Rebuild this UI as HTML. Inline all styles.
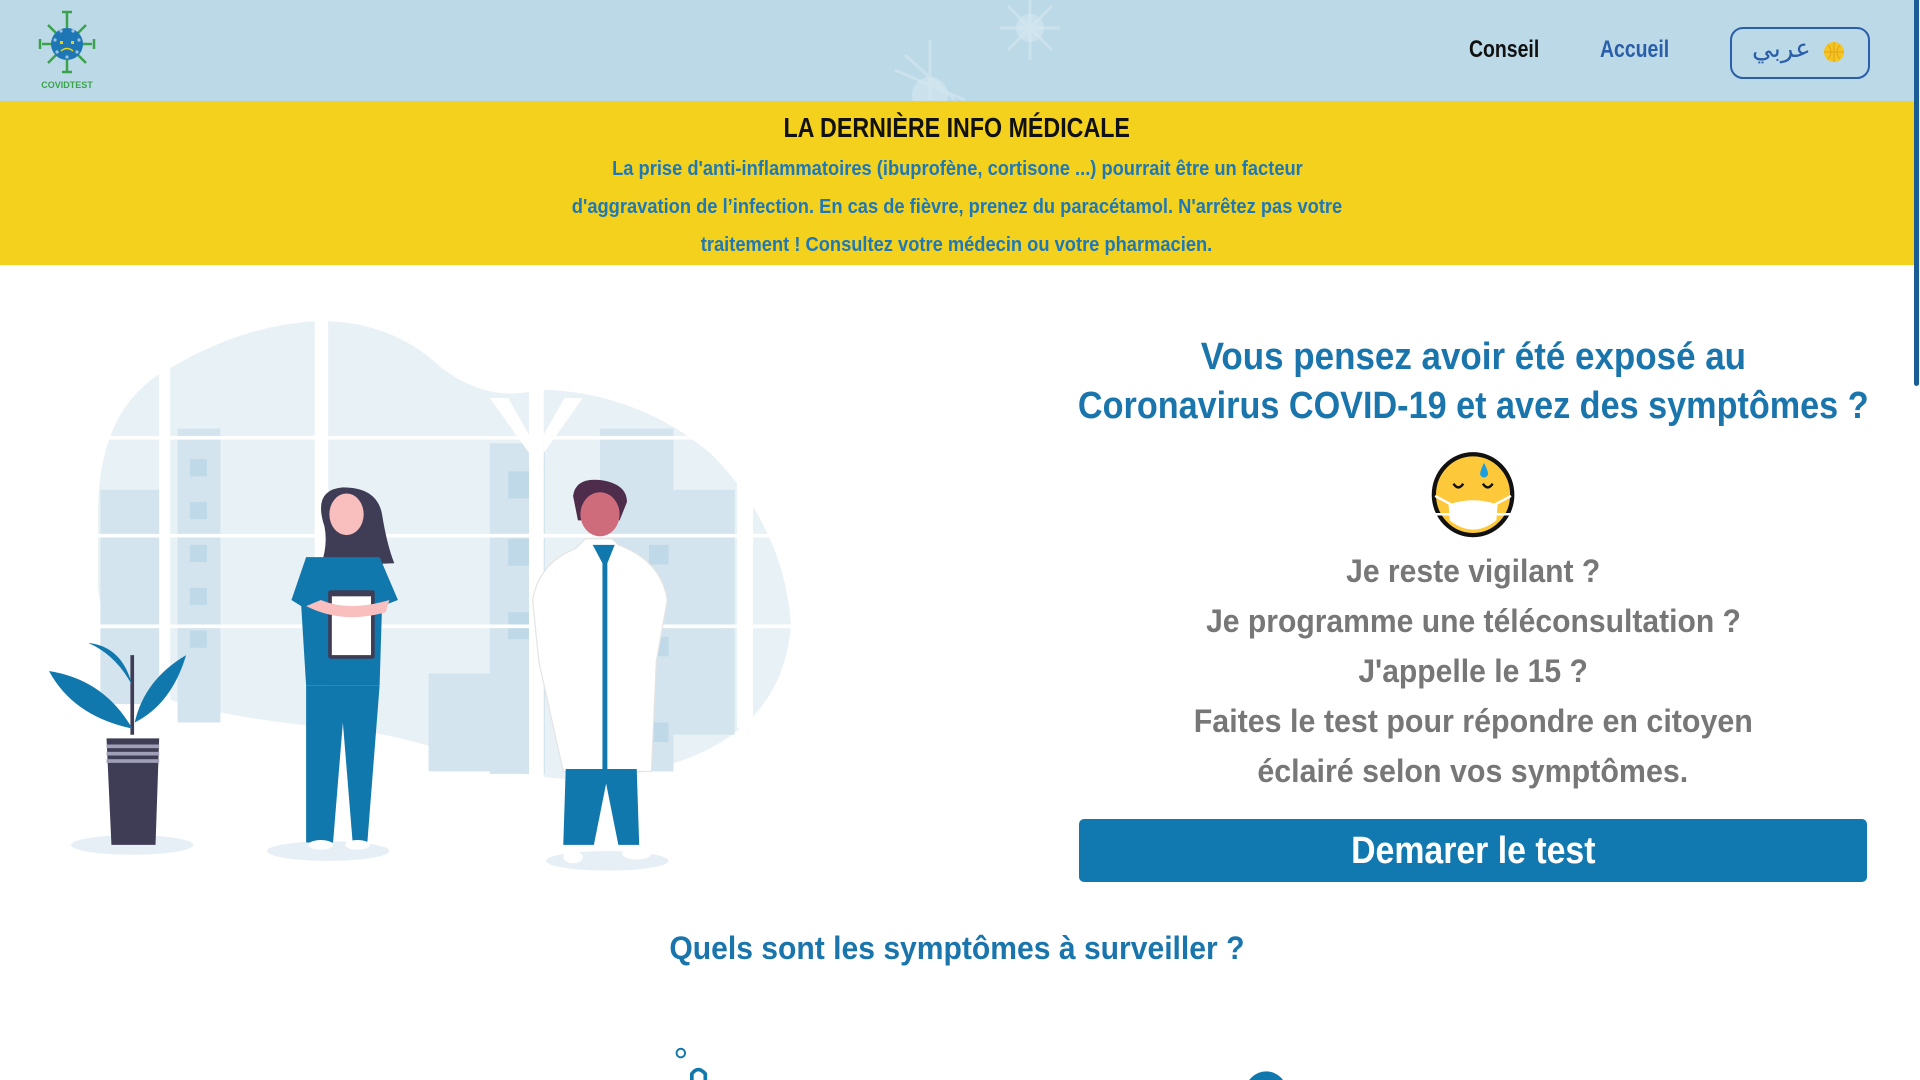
<!DOCTYPE html>
<html><head><meta charset="utf-8"><style>
*{margin:0;padding:0;box-sizing:border-box}
body{width:1920px;height:1080px;overflow:hidden;background:#fff;position:relative;font-family:"Liberation Sans",sans-serif;font-weight:bold}
.s{display:inline-block;white-space:nowrap;transform-origin:50% 50%}
.hdr{position:absolute;left:0;top:0;width:1914px;height:101px;background:#bcd9e8;overflow:hidden}
.ylw{position:absolute;left:0;top:101px;width:1914px;height:164px;background:#f4d11c;text-align:center}
.ylw h2{font-size:28px;color:#111;margin-top:11px;line-height:32px}
.ylw p{font-size:20px;color:#1e78b8;line-height:38px;margin-top:6px}
.abs{position:absolute}
.nav{font-size:24px;top:36px;transform-origin:0 50%;white-space:nowrap}
.btnl{left:1730px;top:27px;width:140px;height:52px;border:2px solid #2a5ea8;border-radius:13px}
h1{position:absolute;left:1000px;width:946px;top:333px;text-align:center;font-size:38px;line-height:49px;color:#1a75ad}
.gray{position:absolute;left:1000px;width:946px;top:546px;text-align:center;font-size:32px;line-height:50px;color:#777}
.go{position:absolute;left:1079px;top:819px;width:788px;height:63px;background:#1278b0;border-radius:5px;color:#fff;font-size:38px;text-align:center;line-height:65px}
h3{position:absolute;left:0;width:1914px;top:930px;text-align:center;font-size:32px;color:#1a75ad}
.sb{position:absolute;left:1914px;top:0;width:6px;height:1080px;background:#fff}
.sbt{position:absolute;left:1914px;top:0;width:5px;height:386px;background:#1a5d94;border-radius:0 0 3px 3px}
</style></head><body>
<div class="hdr">
<svg class="abs" style="left:0;top:0" width="1914" height="101" viewBox="0 0 1914 101">
<g fill="#d6e8f1" opacity=".6"><circle cx="1030" cy="28" r="14"/><circle cx="930" cy="95" r="18"/></g>
<g stroke="#d6e8f1" stroke-width="3" opacity=".6"><path d="M1030 0V60M1000 28H1060M1008 6L1052 50M1052 6L1008 50M930 40V100M895 70L965 100M905 55L955 100"/></g>
<g transform="translate(20,0)">
<g stroke="#3aa24a" stroke-width="2.5" fill="none"><path d="M47 12V28M47 72V60M22 44H34M72 44H60M28 25L36 33M66 25L58 33M28 63L36 55M66 63L58 55M42 12H52M42 72H52M20 39V49M74 39V49"/></g>
<circle cx="47" cy="44" r="16" fill="#1e76b4"/>
<g fill="#9cc4e0"><circle cx="41" cy="31" r="1.6"/><circle cx="53" cy="31" r="1.6"/><circle cx="35" cy="40" r="1.6"/><circle cx="59" cy="40" r="1.6"/><circle cx="37" cy="52" r="1.6"/><circle cx="57" cy="52" r="1.6"/><circle cx="47" cy="57" r="1.6"/></g>
<g fill="#e5d01c"><rect x="40" y="41" width="3" height="3"/><rect x="51" y="41" width="3" height="3"/></g>
<path d="M41 51Q47 46 53 51" stroke="#e5d01c" stroke-width="1.5" fill="none"/>
<text x="47" y="88" text-anchor="middle" font-family="Liberation Sans" font-weight="bold" font-size="9" fill="#3aa24a">COVIDTEST</text>
</g>
<circle cx="1834" cy="52" r="10" fill="#f3c623"/>
<path d="M1824 52H1844M1834 42V62M1828 45Q1834 52 1828 59M1840 45Q1834 52 1840 59" stroke="#e8a817" stroke-width="1.2" fill="none"/>
</svg>
<div class="abs nav" style="left:1469px;color:#111;transform:scaleX(.81)">Conseil</div>
<div class="abs nav" style="left:1600px;color:#2a5ea8;transform:scaleX(.81)">Accueil</div>
<div class="abs btnl"></div>
<div class="abs" style="left:1752px;top:34px;font-size:26px;color:#2a5ea8;font-family:'DejaVu Sans',sans-serif;font-weight:normal">عربي</div>
</div>
<div class="ylw"><h2><span class="s" style="transform:scaleX(.83)">LA DERNIÈRE INFO MÉDICALE</span></h2>
<p><span class="s" style="transform:scaleX(.915)">La prise d'anti-inflammatoires (ibuprofène, cortisone ...) pourrait être un facteur</span><br><span class="s" style="transform:scaleX(.915)">d'aggravation de l’infection. En cas de fièvre, prenez du paracétamol. N'arrêtez pas votre</span><br><span class="s" style="transform:scaleX(.915)">traitement ! Consultez votre médecin ou votre pharmacien.</span></p></div>

<svg class="abs" style="left:0;top:0" width="1920" height="1080" viewBox="0 0 1568 882">
<path d="M80 420Q80 330 140 300Q200 265 260 262Q320 262 360 300Q400 330 440 318Q520 320 580 370Q640 430 646 510Q640 590 560 620Q480 650 400 625Q330 600 280 595Q210 590 150 575Q90 560 80 480Z" fill="#e8f1f6"/>
<g fill="#d3e4ee">
<rect x="82" y="400" width="50" height="175"/><rect x="145" y="350" width="35" height="240"/><rect x="400" y="362" width="45" height="270"/><rect x="490" y="350" width="60" height="280"/><rect x="540" y="400" width="60" height="200"/><rect x="350" y="550" width="60" height="80"/>
</g>
<g fill="#bfd9e8"><rect x="155" y="375" width="14" height="14"/><rect x="155" y="410" width="14" height="14"/><rect x="155" y="445" width="14" height="14"/><rect x="155" y="480" width="14" height="14"/><rect x="155" y="515" width="14" height="14"/><rect x="415" y="385" width="18" height="22"/><rect x="415" y="440" width="18" height="22"/><rect x="415" y="500" width="18" height="22"/><rect x="530" y="445" width="16" height="16"/><rect x="530" y="520" width="16" height="16"/><rect x="530" y="590" width="16" height="16"/></g>
<g fill="#fff"><rect x="130" y="300" width="9" height="280"/><rect x="257" y="262" width="11" height="340"/><rect x="432" y="318" width="12" height="320"/><rect x="602" y="395" width="13" height="200"/><rect x="80" y="356" width="570" height="3"/><rect x="80" y="436" width="570" height="3"/><rect x="80" y="510" width="570" height="3"/><path d="M400 325L432 370V355L415 325ZM476 325L444 370V355L461 325Z"/></g>
<g fill="#e6eff5"><ellipse cx="108" cy="690" rx="50" ry="8"/><ellipse cx="268" cy="695" rx="50" ry="8"/><ellipse cx="496" cy="703" rx="50" ry="8"/></g>
<path d="M108 600V535" stroke="#3f3d56" stroke-width="3"/>
<g fill="#1178ad"><path d="M108 595Q60 585 40 548Q85 555 108 595Z"/><path d="M108 560Q95 535 72 525Q100 528 108 560Z"/><path d="M110 590Q118 555 152 535Q140 575 110 590Z"/></g>
<path d="M87 603H130L127 690H91Z" fill="#3f3d56"/>
<g fill="#a09fb8"><rect x="87" y="608" width="43" height="3"/><rect x="87" y="614" width="43" height="3"/><rect x="87" y="620" width="43" height="3"/></g>
<path d="M265 430Q255 400 280 398Q308 398 312 420Q316 445 322 460L262 462Q268 445 265 430Z" fill="#3f3d56"/>
<ellipse cx="283" cy="420" rx="14" ry="17" fill="#f9bebe"/>
<path d="M250 455L310 455L325 490L312 495L310 560H250L246 495L238 490Z" fill="#1178ad"/>
<path d="M250 560H310L300 688H288L280 590L272 688H250Z" fill="#1178ad"/>
<rect x="268" y="482" width="38" height="56" rx="2" fill="#3f3d56"/><rect x="271" y="487" width="32" height="48" fill="#fff"/>
<path d="M250 495Q280 510 315 500L318 490Q285 500 262 490Z" fill="#f9bebe"/>
<path d="M468 405Q470 390 490 392Q512 395 512 410L506 425H472Z" fill="#4e2c4b"/>
<ellipse cx="490" cy="420" rx="16" ry="18" fill="#cf6c7c"/>
<path d="M478 440L470 448Q440 460 435 490L440 540L460 630H532L536 540L545 490Q540 458 505 445L500 440Z" fill="#fff" stroke="#e4e4e4"/>
<path d="M484 445L492 460V630H496V460L502 445Z" fill="#1178ad"/>
<path d="M462 628H520L522 690H505L495 640L485 690H460Z" fill="#1178ad"/>
<g fill="#fff"><ellipse cx="468" cy="700" rx="8" ry="5"/><ellipse cx="520" cy="697" rx="12" ry="5"/><ellipse cx="262" cy="690" rx="10" ry="4"/><ellipse cx="292" cy="690" rx="10" ry="4"/></g>
<circle cx="556" cy="860" r="3.5" fill="none" stroke="#1178ad" stroke-width="1.6"/>
<path d="M576 882V877Q570 870 565 877V882" stroke="#1178ad" stroke-width="3" fill="none"/>
<circle cx="1034" cy="892" r="17" fill="#1178ad"/>
<ellipse cx="1203" cy="404" rx="32" ry="33" fill="#fdc93b" stroke="#111" stroke-width="3.5"/>
<path d="M1183 412Q1203 405 1223 412L1222 425Q1203 440 1184 425Z" fill="#fff"/>
<path d="M1172 405L1185 412M1172 420L1184 420M1234 405L1221 412M1234 420L1222 420" stroke="#fff" stroke-width="2"/>
<path d="M1187 395Q1191 401 1195 395M1211 395Q1215 401 1219 395" stroke="#111" stroke-width="2" fill="none"/>
<path d="M1212 378Q1208 386 1209 388Q1212 392 1215 388Q1216 386 1212 378Z" fill="#1a9ee0"/>
</svg>

<h1><span class="s" style="transform:scaleX(.92)">Vous pensez avoir été exposé au</span><br><span class="s" style="transform:scaleX(.9)">Coronavirus COVID-19 et avez des symptômes ?</span></h1>
<div class="gray"><span class="s" style="transform:scaleX(.94)">Je reste vigilant ?</span><br><span class="s" style="transform:scaleX(.94)">Je programme une téléconsultation ?</span><br><span class="s" style="transform:scaleX(.94)">J'appelle le 15 ?</span><br><span class="s" style="transform:scaleX(.95)">Faites le test pour répondre en citoyen</span><br><span class="s" style="transform:scaleX(.95)">éclairé selon vos symptômes.</span></div>
<div class="go"><span class="s" style="transform:scaleX(.89)">Demarer le test</span></div>
<h3><span class="s" style="transform:scaleX(.94)">Quels sont les symptômes à surveiller ?</span></h3>
<div class="sb"></div><div class="sbt"></div>
</body></html>
